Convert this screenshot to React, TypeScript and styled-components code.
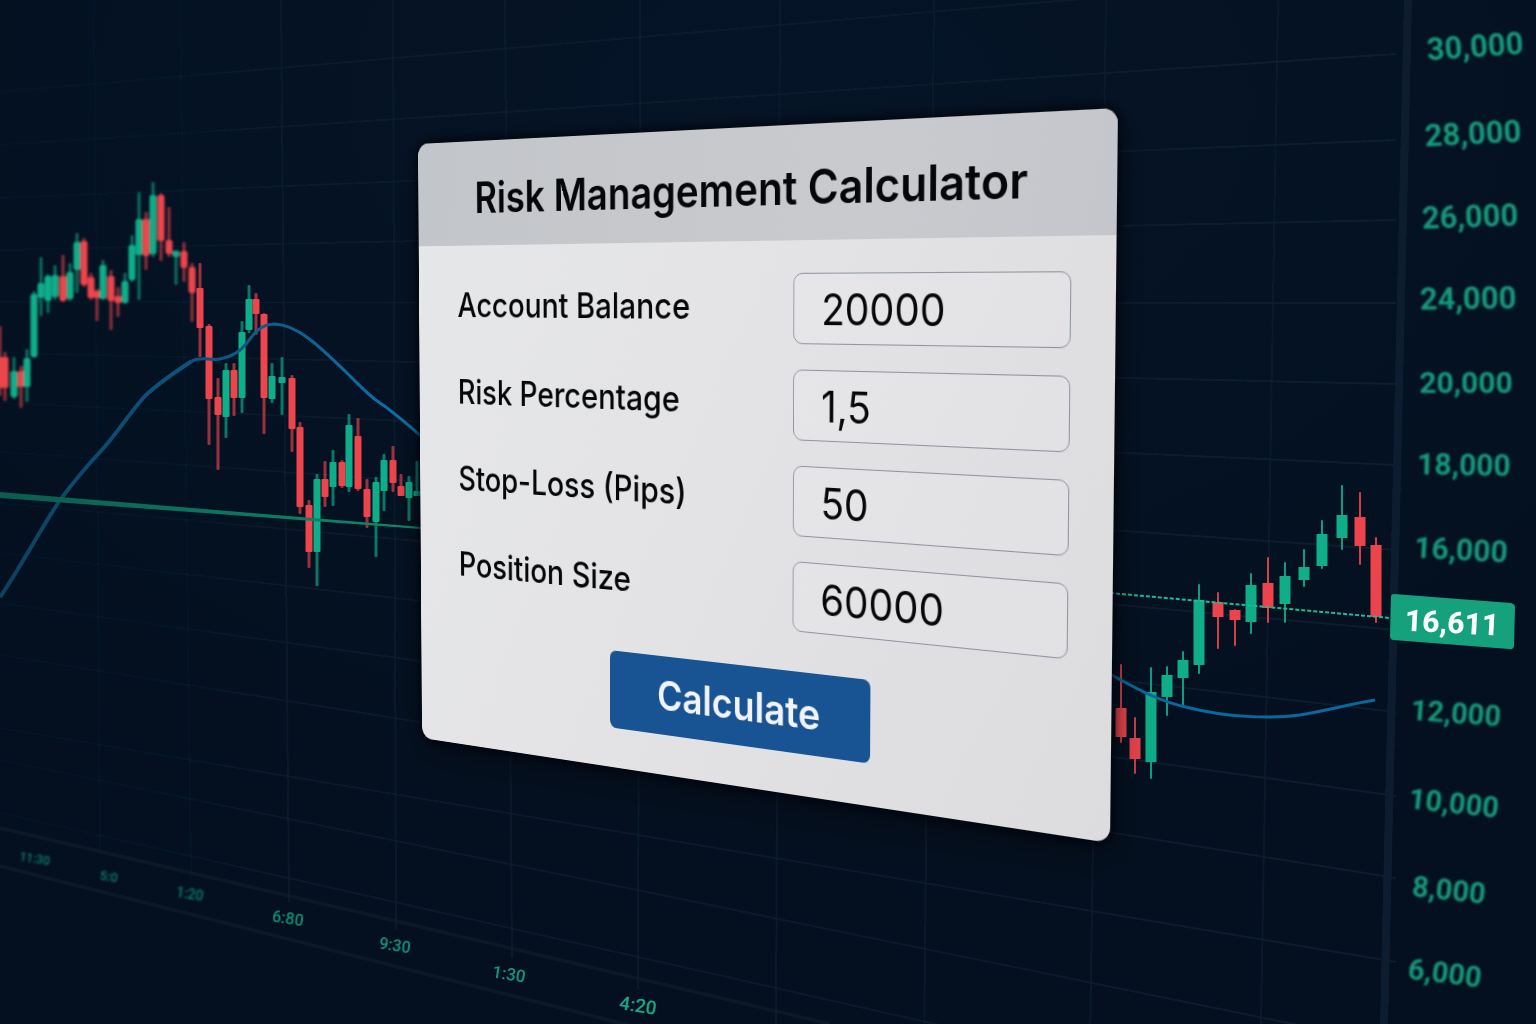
import React, { useState } from "react";
import styled, { createGlobalStyle } from "styled-components";

const GlobalStyle = createGlobalStyle`
  *, *::before, *::after { box-sizing: border-box; }
  body { margin: 0; background: #04101f; }
`;

const FONT = `Inter, "Liberation Sans", sans-serif`;
const CHART_FONT = `Roboto, "Liberation Sans", sans-serif`;

/* ---------- perspective ---------- */

type Point = [number, number];

/** Projects a flat width x height box onto four corners: tl, tr, br, bl. */
function project(width: number, height: number, [tl, tr, br, bl]: Point[]): string {
  const dx1 = tr[0] - br[0];
  const dx2 = bl[0] - br[0];
  const dx3 = tl[0] - tr[0] + br[0] - bl[0];
  const dy1 = tr[1] - br[1];
  const dy2 = bl[1] - br[1];
  const dy3 = tl[1] - tr[1] + br[1] - bl[1];
  const det = dx1 * dy2 - dx2 * dy1;
  const g = (dx3 * dy2 - dx2 * dy3) / det;
  const h = (dx1 * dy3 - dx3 * dy1) / det;
  const a = tr[0] - tl[0] + g * tr[0];
  const b = bl[0] - tl[0] + h * bl[0];
  const d = tr[1] - tl[1] + g * tr[1];
  const e = bl[1] - tl[1] + h * bl[1];
  const m = [
    a / width, d / width, 0, g / width,
    b / height, e / height, 0, h / height,
    0, 0, 1, 0,
    tl[0], tl[1], 0, 1,
  ];
  return `matrix3d(${m.join(",")})`;
}

const CARD_WIDTH = 800;
const CARD_HEIGHT = 664;
const CARD_TILT = project(CARD_WIDTH, CARD_HEIGHT, [
  [50, -36],
  [750, -72],
  [742, 663],
  [54, 558],
]);

/* ---------- layout ---------- */

const Page = styled.div`
  position: relative;
  min-height: 100vh;
  display: grid;
  place-items: center;
  overflow: hidden;
  background: #04101f;
  font-family: ${FONT};
`;

const Backdrop = styled.svg`
  position: absolute;
  inset: 0;
  width: 100%;
  height: 100%;
  font-family: ${CHART_FONT};
`;

const Card = styled.form`
  position: relative;
  width: ${CARD_WIDTH}px;
  transform: ${CARD_TILT};
  transform-origin: 0 0;
  border-radius: 14px;
  overflow: hidden;
  background: linear-gradient(115deg, #e6e7e9 0%, #e3e3e5 50%, #dcdcdf 100%);
  box-shadow: 0 0 10px 2px rgba(0, 2, 8, 0.8), 0 10px 40px rgba(0, 2, 8, 0.5);
  color: #060709;
`;

const Header = styled.header`
  height: 113px;
  padding: 8px 6px 0 0;
  display: flex;
  align-items: center;
  justify-content: center;
  background: linear-gradient(100deg, #c2c5c9 0%, #c9cace 70%, #c5c6cb 100%);
`;

const Title = styled.h1`
  margin: 0;
  font-size: 46px;
  line-height: 56px;
  font-weight: 600;
  white-space: nowrap;
`;

const Body = styled.div`
  display: flex;
  flex-direction: column;
  align-items: center;
  gap: 40px;
  padding: 32px 42px 42px 54px;
`;

const Fields = styled.div`
  width: 100%;
  display: flex;
  flex-direction: column;
  gap: 25px;
`;

const Field = styled.div`
  display: grid;
  grid-template-columns: 1fr 286px;
  align-items: center;
`;

const Label = styled.label`
  padding-bottom: 4px;
  font-size: 37px;
  line-height: 44px;
  font-weight: 500;
`;

const Input = styled.input`
  width: 100%;
  height: 70px;
  padding: 0 30px;
  border: 1px solid #8d95a1;
  border-radius: 10px;
  background: rgba(255, 255, 255, 0.12);
  color: inherit;
  font: 400 42px/52px ${FONT};
  outline: none;
  &:focus-visible { border-color: #185394; }
`;

const Submit = styled.button`
  width: 304px;
  height: 82px;
  padding: 0 0 0 4px;
  border: 0;
  border-radius: 8px;
  background: #185394;
  color: #f1f3f6;
  font: 600 42px/52px ${FONT};
  cursor: pointer;
  &:hover { background: #1b5ba2; }
`;

/* ---------- chart data ---------- */

type Candle = [x: number, high: number, top: number, bottom: number, low: number, dir: "u" | "d"];

const EARLY: Candle[] = [
  [0, 326, 357, 388, 396, "d"], [5, 352, 357, 388, 401, "d"], [14, 357, 371, 397, 399, "u"],
  [21, 366, 371, 387, 408, "d"], [27, 349, 358, 387, 402, "u"], [34, 291, 294, 357, 358, "u"],
  [41, 257, 283, 298, 316, "u"], [48, 274, 276, 301, 313, "u"], [55, 265, 275, 297, 300, "u"],
  [63, 255, 276, 301, 302, "d"], [70, 263, 272, 299, 301, "u"], [77, 233, 242, 270, 293, "u"],
  [84, 238, 241, 285, 287, "d"], [91, 273, 277, 298, 300, "d"], [97, 289, 291, 298, 321, "d"],
  [103, 260, 265, 299, 300, "u"], [111, 270, 276, 301, 330, "d"], [118, 287, 296, 303, 317, "d"],
  [125, 273, 281, 303, 304, "u"], [132, 235, 245, 280, 282, "u"], [139, 192, 219, 255, 300, "u"],
  [146, 212, 219, 256, 270, "d"], [153, 182, 195, 254, 257, "u"], [161, 193, 195, 241, 261, "d"],
  [169, 207, 240, 254, 257, "d"], [176, 250, 251, 257, 285, "u"], [184, 242, 251, 268, 282, "d"],
  [192, 263, 267, 293, 322, "d"],
];

const MIDDLE: Candle[] = [
  [200, 263, 288, 328, 357, "d"], [209, 324, 326, 399, 445, "d"], [218, 378, 397, 415, 470, "d"],
  [226, 363, 370, 417, 438, "u"], [234, 363, 370, 398, 416, "d"], [242, 321, 332, 398, 413, "u"],
  [249, 285, 299, 330, 333, "u"], [256, 293, 299, 314, 335, "d"], [264, 313, 314, 398, 434, "d"],
  [272, 363, 376, 399, 403, "u"], [282, 357, 377, 383, 415, "u"], [292, 375, 378, 429, 452, "d"],
  [300, 422, 427, 507, 514, "d"], [309, 500, 505, 552, 568, "d"], [317, 474, 479, 552, 586, "u"],
  [325, 461, 479, 497, 507, "d"], [333, 450, 462, 487, 506, "u"], [342, 460, 462, 486, 488, "d"],
  [349, 414, 425, 487, 492, "u"], [358, 418, 436, 489, 491, "d"], [367, 479, 489, 517, 528, "d"],
  [376, 477, 482, 522, 557, "u"], [384, 454, 460, 491, 511, "u"], [393, 446, 460, 483, 492, "d"],
  [401, 474, 486, 496, 496, "d"], [409, 476, 482, 498, 521, "u"], [417, 461, 491, 496, 496, "u"],
];

const LATE: Candle[] = [
  [1121, 664, 708, 737, 743, "d"], [1135, 717, 738, 759, 774, "d"], [1151, 667, 692, 762, 779, "u"],
  [1167, 666, 675, 697, 716, "u"], [1183, 651, 660, 678, 707, "u"], [1199, 584, 600, 665, 674, "u"],
  [1218, 592, 602, 617, 649, "d"], [1235, 609, 610, 620, 646, "d"], [1251, 573, 585, 622, 634, "u"],
  [1268, 557, 583, 608, 623, "d"], [1285, 562, 576, 604, 623, "u"], [1304, 549, 567, 580, 587, "u"],
  [1322, 520, 534, 566, 569, "u"], [1342, 485, 515, 538, 550, "u"], [1360, 492, 517, 546, 565, "d"],
  [1376, 537, 545, 617, 623, "d"],
];

const COLORS = { u: "#0fae89", d: "#ec444c" };

/** Left and right ends (x = 0 and x = 1396) of each price grid line. */
const PRICE_LINES: Point[] = [
  [92, -28], [145, 54], [198, 140], [250, 220], [302, 303], [353, 384], [403, 465], [452, 550],
  [503, 630], [553, 712], [603, 796], [655, 878], [728, 962], [760, 1045], [813, 1128],
];

/** Top and bottom x of each time grid line. */
const TIME_LINES: Point[] = [
  [94, 100], [180, 191], [281, 289], [393, 396], [505, 512], [640, 638],
  [780, 776], [934, 924], [1106, 1089], [1278, 1259],
];

const PRICES: { text: string; x: number; y: number; size: number; angle: number }[] = [
  { text: "30,000", x: 1475, y: 46, size: 31, angle: -4 },
  { text: "28,000", x: 1473, y: 133, size: 31, angle: -3 },
  { text: "26,000", x: 1470, y: 216, size: 31, angle: -2 },
  { text: "24,000", x: 1468, y: 298, size: 31, angle: -1 },
  { text: "20,000", x: 1466, y: 382, size: 30, angle: 0 },
  { text: "18,000", x: 1464, y: 464, size: 30, angle: 1 },
  { text: "16,000", x: 1461, y: 549, size: 30, angle: 3 },
  { text: "12,000", x: 1456, y: 712, size: 29, angle: 4 },
  { text: "10,000", x: 1454, y: 802, size: 29, angle: 6 },
  { text: "8,000", x: 1449, y: 889, size: 29, angle: 6 },
  { text: "6,000", x: 1445, y: 972, size: 29, angle: 7 },
];

const TIMES: { text: string; x: number; y: number; size: number; blur: string; opacity: number }[] = [
  { text: "11:30", x: 35, y: 857, size: 12, blur: "mid", opacity: 0.75 },
  { text: "5:0", x: 109, y: 875, size: 13, blur: "mid", opacity: 0.75 },
  { text: "1:20", x: 190, y: 893, size: 14, blur: "mid", opacity: 0.75 },
  { text: "6:80", x: 288, y: 918, size: 16, blur: "near", opacity: 0.85 },
  { text: "9:30", x: 395, y: 945, size: 16, blur: "near", opacity: 0.9 },
  { text: "1:30", x: 509, y: 974, size: 17, blur: "", opacity: 0.9 },
  { text: "4:20", x: 638, y: 1006, size: 19, blur: "", opacity: 1 },
];

function Candles({ data, width, radius, wick, fade }: {
  data: Candle[]; width: number; radius: number; wick: number; fade: number;
}) {
  return (
    <>
      {data.map(([x, high, top, bottom, low, dir]) => (
        <g key={x} fill={COLORS[dir]}>
          <rect x={x - wick / 2} y={high} width={wick} height={low - high} rx={1} opacity={fade} />
          <rect x={x - width / 2} y={top} width={width} height={bottom - top} rx={radius} />
        </g>
      ))}
    </>
  );
}

function Chart() {
  return (
    <Backdrop viewBox="0 0 1536 1024" preserveAspectRatio="xMidYMid slice" role="img" aria-label="Price chart">
      <defs>
        <radialGradient id="glow" cx="0.52" cy="0.1" r="0.75">
          <stop offset="0" stopColor="#051427" />
          <stop offset="1" stopColor="#04101f" />
        </radialGradient>
        <linearGradient id="rule" x1="0" x2="1396" y1="0" y2="0" gradientUnits="userSpaceOnUse">
          <stop offset="0" stopColor="#0f2032" stopOpacity="0.25" />
          <stop offset="0.3" stopColor="#0f2032" stopOpacity="0.6" />
          <stop offset="1" stopColor="#102032" stopOpacity="0.7" />
        </linearGradient>
        <linearGradient id="average" x1="0" x2="421" y1="0" y2="0" gradientUnits="userSpaceOnUse">
          <stop offset="0" stopColor="#07425c" />
          <stop offset="0.5" stopColor="#085580" />
          <stop offset="1" stopColor="#0b72ab" />
        </linearGradient>
        <linearGradient id="level" x1="0" x2="421" y1="0" y2="0" gradientUnits="userSpaceOnUse">
          <stop offset="0" stopColor="#085b4d" />
          <stop offset="1" stopColor="#0c8a6c" />
        </linearGradient>
        <filter id="near" x="-20%" y="-20%" width="140%" height="140%"><feGaussianBlur stdDeviation="0.6" /></filter>
        <filter id="mid" x="-20%" y="-20%" width="140%" height="140%"><feGaussianBlur stdDeviation="0.9" /></filter>
      </defs>

      <rect width="1536" height="1024" fill="url(#glow)" />

      <g filter="url(#near)">
        <g stroke="url(#rule)" strokeWidth="2">
          {PRICE_LINES.map(([left, right]) => (
            <path key={left} d={`M0 ${left}L1396 ${right}`} />
          ))}
        </g>
        <g stroke="#0e1e2f" strokeWidth="2">
          {TIME_LINES.map(([top, bottom]) => (
            <line key={top} x1={top} y1="0" x2={bottom} y2={830 + bottom / 4} opacity={bottom < 250 ? 0.4 : 0.7} />
          ))}
        </g>
        <path d="M0 828L400 922L830 1024M0 866L430 975L640 1028" fill="none" stroke="#0c1c2c" strokeWidth="4" opacity="0.6" />
        <line x1="1408" y1="0" x2="1384" y2="1024" stroke="#0e1e2d" strokeWidth="8" />
      </g>

      <g filter="url(#mid)"><Candles data={EARLY} width={7} radius={2} wick={3} fade={0.6} /></g>
      <g filter="url(#near)"><Candles data={MIDDLE} width={7} radius={1} wick={3} fade={0.65} /></g>
      <Candles data={LATE} width={11} radius={0} wick={2} fade={0.9} />

      <path
        d="M0 597C20 568 40 530 60 500C72 484 85 468 100 452C117 434 130 412 145 396C160 382 178 370 192 361"
        fill="none" stroke="url(#average)" strokeWidth="4" filter="url(#near)"
      />
      <path
        d="M192 361C202 356 210 361 220 359C232 357 240 352 247 343C254 333 261 324 275 324C300 325 325 352 348 374C362 388 368 395 380 403C395 413 408 425 421 436"
        fill="none" stroke="url(#average)" strokeWidth="3" filter="url(#near)"
      />
      <path d="M0 492L421 527L421 529L0 498Z" fill="url(#level)" filter="url(#near)" />
      <path
        d="M1110 674C1135 688 1160 702 1190 708C1225 717 1270 719 1300 715C1325 711 1350 704 1375 700"
        fill="none" stroke="#08699f" strokeWidth="3"
      />
      <line x1="1110" y1="593" x2="1390" y2="618" stroke="#1cbd92" strokeWidth="2" strokeDasharray="4 2" />

      <g fill="#149a7b" fontWeight="700" textAnchor="middle" filter="url(#mid)">
        {PRICES.map(({ text, x, y, size, angle }) => (
          <text key={text} transform={`rotate(${angle} ${x} ${y})`} x={x} y={y + 11} fontSize={size}>{text}</text>
        ))}
      </g>

      <g filter="url(#near)">
        <path
          d="M1394 594L1511 603Q1515 604 1515 607L1514 646Q1513 650 1509 649L1393 640Q1390 639 1390 636L1391 597Q1391 594 1394 594Z"
          fill="#13a17d"
        />
        <text x="1452" y="633" transform="rotate(3 1452 622)" fill="#fff" fontSize="30" fontWeight="800" textAnchor="middle">
          16,611
        </text>
      </g>

      <g fill="#16a585" fontWeight="500" textAnchor="middle">
        {TIMES.map(({ text, x, y, size, blur, opacity }) => (
          <text
            key={x}
            x={x}
            y={y + 6}
            fontSize={size}
            opacity={opacity}
            transform={`rotate(9 ${x} ${y})`}
            filter={blur ? `url(#${blur})` : undefined}
          >
            {text}
          </text>
        ))}
      </g>
    </Backdrop>
  );
}

/* ---------- calculator ---------- */

const UNITS_PER_PIP = 10000;
const toNumber = (value: string) => Number(value.replace(",", "."));

export default function App() {
  const [balance, setBalance] = useState("20000");
  const [risk, setRisk] = useState("1,5");
  const [stop, setStop] = useState("50");
  const [size, setSize] = useState("60000");

  const fields = [
    { id: "balance", label: "Account Balance", value: balance, set: setBalance },
    { id: "risk", label: "Risk Percentage", value: risk, set: setRisk },
    { id: "stop", label: "Stop-Loss (Pips)", value: stop, set: setStop },
    { id: "size", label: "Position Size", value: size, set: setSize },
  ];

  const calculate = (event: React.FormEvent) => {
    event.preventDefault();
    const result = ((toNumber(balance) * toNumber(risk)) / 100 / toNumber(stop)) * UNITS_PER_PIP;
    if (Number.isFinite(result)) setSize(String(Math.round(result)));
  };

  return (
    <Page>
      <GlobalStyle />
      <Chart />
      <Card onSubmit={calculate}>
        <Header>
          <Title>Risk Management Calculator</Title>
        </Header>
        <Body>
          <Fields>
            {fields.map(({ id, label, value, set }) => (
              <Field key={id}>
                <Label htmlFor={id}>{label}</Label>
                <Input id={id} inputMode="decimal" value={value} onChange={(e) => set(e.target.value)} />
              </Field>
            ))}
          </Fields>
          <Submit type="submit">Calculate</Submit>
        </Body>
      </Card>
    </Page>
  );
}
